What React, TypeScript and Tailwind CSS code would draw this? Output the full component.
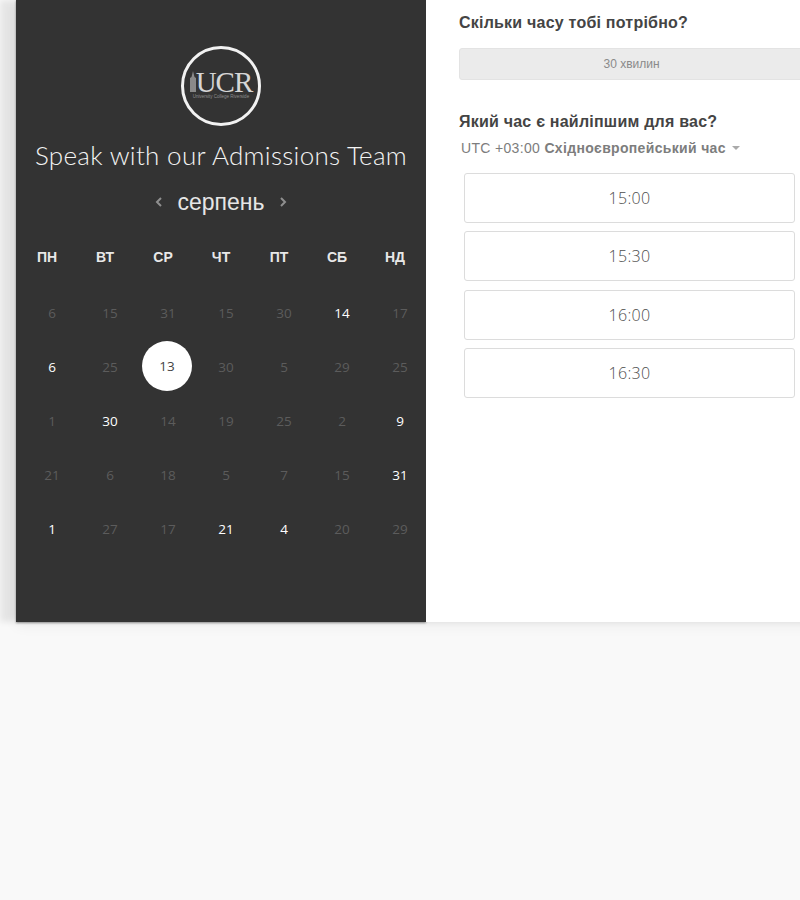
const rows: [string, boolean][][] = [
  [["6", false], ["15", false], ["31", false], ["15", false], ["30", false], ["14", true], ["17", false]],
  [["6", true], ["25", false], ["13", true], ["30", false], ["5", false], ["29", false], ["25", false]],
  [["1", false], ["30", true], ["14", false], ["19", false], ["25", false], ["2", false], ["9", true]],
  [["21", false], ["6", false], ["18", false], ["5", false], ["7", false], ["15", false], ["31", true]],
  [["1", true], ["27", false], ["17", false], ["21", true], ["4", true], ["20", false], ["29", false]],
];
const week = ["ПН", "ВТ", "СР", "ЧТ", "ПТ", "СБ", "НД"];
const slots = ["15:00", "15:30", "16:00", "16:30"];

function Logo() {
  return (
    <svg width="82" height="80" viewBox="0 0 82 80" className="block">
      <circle cx="41" cy="40" r="38.5" fill="none" stroke="#f2f2f2" strokeWidth="3" />
      <path d="M10 46V32l1.500-1 1.500-6 1.500 6 1.500 1v14z" fill="#8a8a8a" />
      <text x="44" y="46" textAnchor="middle" fontFamily="Liberation Serif, serif" fontSize="29" fill="#d6d6d6" letterSpacing="-1">UCR</text>
      <text x="41" y="52" textAnchor="middle" fontFamily="Liberation Sans, sans-serif" fontSize="4.500" fill="#8f8f8f">University College Riverside</text>
    </svg>
  );
}

export default function App() {
  return (
    <div className="h-[900px] w-[800px] overflow-hidden bg-[#f9f9f9] font-['Liberation_Sans',sans-serif]">
      <div className="ml-4 flex h-[622px] w-[840px] shadow-[0_3px_14px_rgba(0,0,0,0.06),-16px_0_6px_rgba(0,0,0,0.08)]">
        <div className="flex w-[410px] shrink-0 flex-col items-center bg-[#333333] pt-[46px] shadow-[0_1px_2px_rgba(0,0,0,0.4)]">
          <Logo />
          <h1 className="mt-[11px] whitespace-nowrap font-['Lato',sans-serif] text-[26px] font-light leading-[36px] tracking-[0.3px] text-[#f4f4f4]">
            Speak with our Admissions Team
          </h1>
          <div className="mt-[13px] flex h-8 items-center text-[#8f8f8f]">
            <svg width="10" height="12" viewBox="0 0 10 12" fill="none" stroke="currentColor" strokeWidth="2"><path d="M7 2 3 6l4 4" /></svg>
            <span className="mx-[13px] text-[23px] leading-8 text-[#e6e6e6]">серпень</span>
            <svg width="10" height="12" viewBox="0 0 10 12" fill="none" stroke="currentColor" strokeWidth="2"><path d="m3 2 4 4-4 4" /></svg>
          </div>
          <div className="mt-[29px] grid w-[406px] grid-cols-7 text-center text-[14px] font-bold leading-5 text-[#e8e8e8]">
            {week.map((d) => <div key={d}>{d}</div>)}
          </div>
          <div className="mt-[19px] grid w-[406px] translate-x-[5px] grid-cols-7 text-center font-['Open_Sans',sans-serif] text-[13.500px]">
            {rows.flat().map(([n, active], i) => (
              <div key={i} className="flex h-[54px] items-center justify-center">
                {i === 9 ? (
                  <span className="flex h-[50px] w-[50px] -translate-x-[1px] -translate-y-[1px] items-center justify-center rounded-full bg-white text-[#444444]">13</span>
                ) : (
                  <span className={active ? "font-medium text-white" : "text-[#5c5c5c]"}>{n}</span>
                )}
              </div>
            ))}
          </div>
        </div>
        <div className="min-w-0 flex-1 bg-white pl-[33px] pr-[46px] text-[#444444]">
          <h2 className="mt-[13px] text-[16px] font-bold leading-[20px] tracking-[0.22px]">Скільки часу тобі потрібно?</h2>
          <div className="mt-[15px] flex h-[32px] w-[361px] items-center justify-center rounded-[3px] border border-[#e3e3e3] bg-[#ebebeb] pr-[16px] text-[12px] text-[#8a8a8a]">
            30 хвилин
          </div>
          <h2 className="mt-[32px] text-[16px] font-bold leading-[20px] tracking-[0.22px]">Який час є найліпшим для вас?</h2>
          <div className="ml-[2px] mt-[6px] flex items-center text-[14px] leading-5 tracking-[0.33px] text-[#7d7d7d]">
            <span>UTC +03:00&nbsp;</span>
            <span className="font-bold">Східноєвропейський час</span>
            <span className="ml-[6px] h-0 w-0 border-x-[4px] border-t-[4px] border-x-transparent border-t-[#aaaaaa]" />
          </div>
          <div className="ml-[5px] mt-[15px] flex w-[331px] flex-col gap-[8.300px]">
            {slots.map((s) => (
              <div key={s} className="flex h-[50px] items-center justify-center rounded-[3px] border border-[#dcdcdc] bg-white font-['Open_Sans',sans-serif] text-[16px] font-light tracking-[0.3px] text-[#4d4d4d]">
                {s}
              </div>
            ))}
          </div>
        </div>
      </div>
    </div>
  );
}
